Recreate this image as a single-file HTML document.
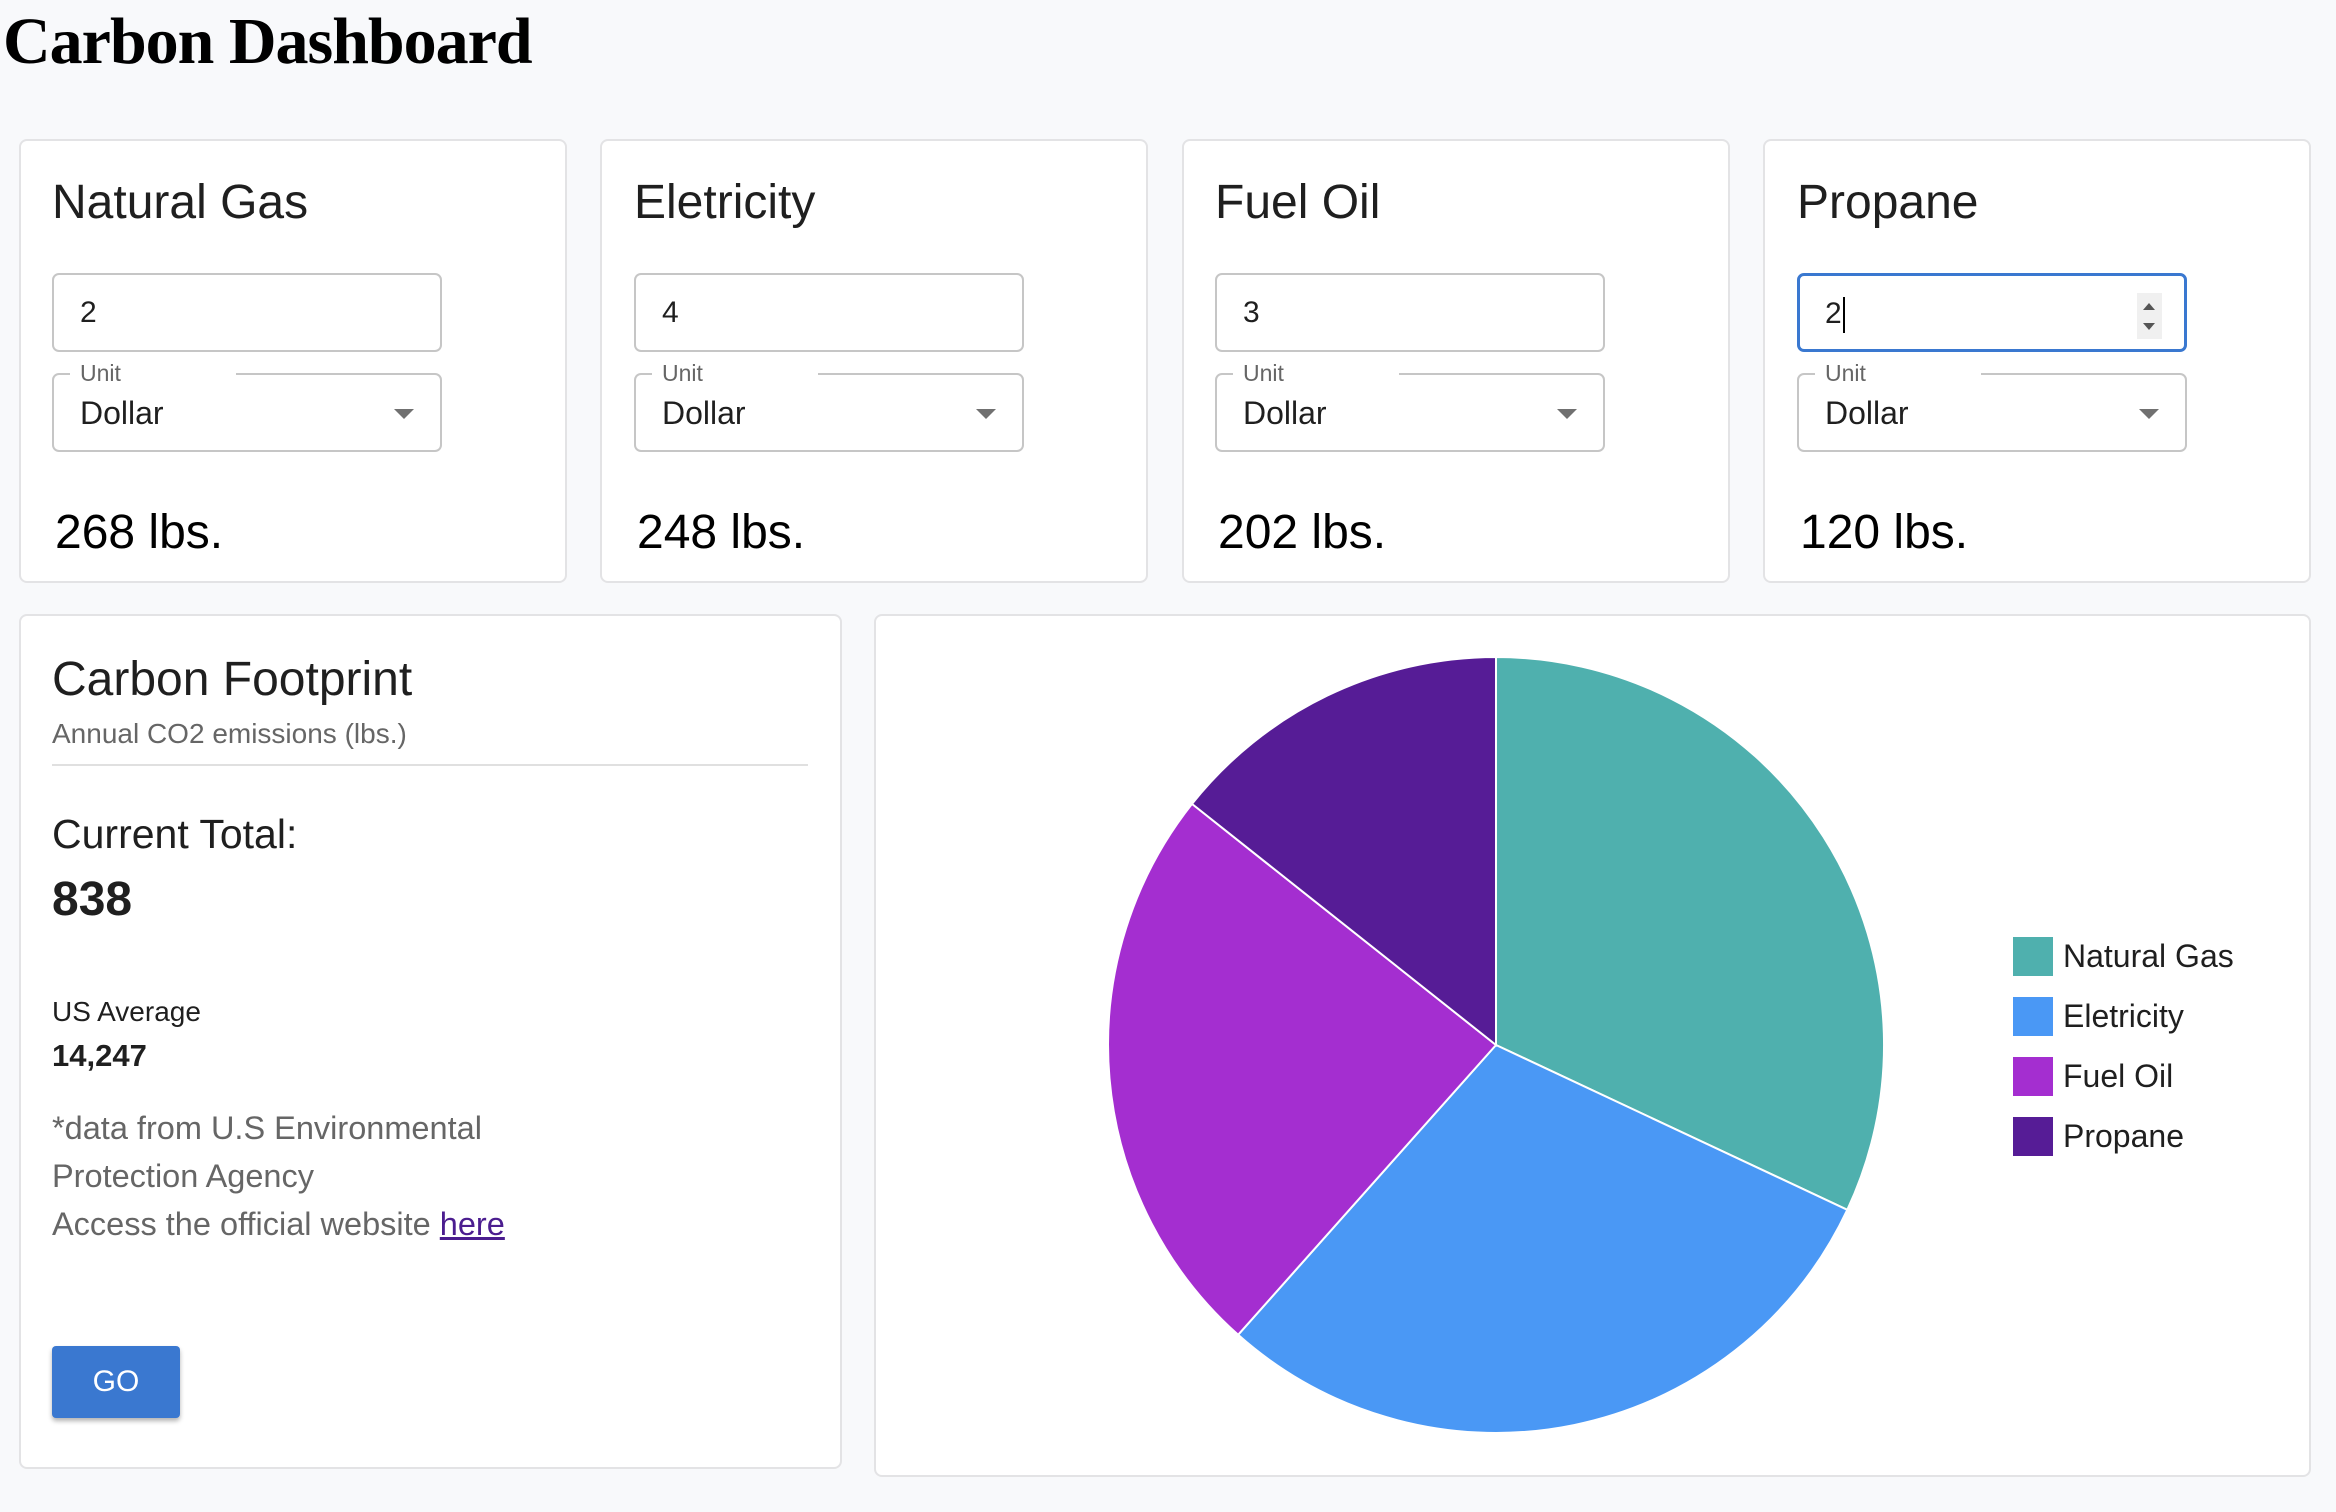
<!DOCTYPE html>
<html><head><meta charset="utf-8"><style>
*{box-sizing:border-box;margin:0;padding:0}
body{width:2336px;height:1512px;background:#f8f9fb;position:relative;overflow:hidden;font-family:"Liberation Sans",Arial,sans-serif;color:#1f1f1f}
.a{position:absolute;white-space:nowrap}
h1{position:absolute;left:3px;top:2px;font-family:"Liberation Serif",serif;font-weight:bold;font-size:66px;line-height:80px;color:#000;letter-spacing:-1px}
.card{position:absolute;background:#fff;border:2px solid #e3e3e5;border-radius:8px}
.t{font-size:48px;line-height:50px}
.inp{position:absolute;border:2px solid #c6c6c6;border-radius:7px;width:390px;height:79px;font-size:30px;padding-left:26px;line-height:75px}
.sel{position:absolute;border:2px solid #c6c6c6;border-radius:7px;width:390px;height:79px}
.lab{position:absolute;top:-20px;left:16px;width:166px;background:#fff;padding:0 10px;font-size:23px;color:#666;line-height:36px}
.dol{position:absolute;left:26px;top:20px;font-size:32px}
.arr{position:absolute;right:26px;top:34px;width:0;height:0;border-left:10px solid transparent;border-right:10px solid transparent;border-top:10px solid #707070}
.lbs{font-size:48px;color:#000}
.lg{position:absolute;left:2013px;width:40px;height:39px}
.lt{position:absolute;left:2063px;font-size:32px;line-height:39px;color:#1f1f1f}
</style></head><body>
<h1>Carbon Dashboard</h1>

<div class="card" style="left:19px;top:139px;width:548px;height:444px"></div>
<div class="card" style="left:600px;top:139px;width:548px;height:444px"></div>
<div class="card" style="left:1182px;top:139px;width:548px;height:444px"></div>
<div class="card" style="left:1763px;top:139px;width:548px;height:444px"></div>

<div class="a t" style="left:52px;top:178px">Natural Gas</div>
<div class="a t" style="left:634px;top:178px">Eletricity</div>
<div class="a t" style="left:1215px;top:178px">Fuel Oil</div>
<div class="a t" style="left:1797px;top:178px">Propane</div>

<div class="inp" style="left:52px;top:273px">2</div>
<div class="inp" style="left:634px;top:273px">4</div>
<div class="inp" style="left:1215px;top:273px">3</div>
<div class="inp" style="left:1797px;top:273px;border:3px solid #3a78d0;padding-left:25px">2<span style="display:inline-block;width:2px;height:36px;background:#000;vertical-align:middle;margin-left:1px"></span>
<div style="position:absolute;right:22px;top:17px;width:25px;height:46px;background:#f0f0f0"><div style="position:absolute;left:6px;top:10px;border-left:6px solid transparent;border-right:6px solid transparent;border-bottom:7px solid #555"></div><div style="position:absolute;left:6px;top:30px;border-left:6px solid transparent;border-right:6px solid transparent;border-top:7px solid #555"></div></div></div>

<div class="sel" style="left:52px;top:373px"><div class="lab">Unit</div><div class="dol">Dollar</div><div class="arr"></div></div>
<div class="sel" style="left:634px;top:373px"><div class="lab">Unit</div><div class="dol">Dollar</div><div class="arr"></div></div>
<div class="sel" style="left:1215px;top:373px"><div class="lab">Unit</div><div class="dol">Dollar</div><div class="arr"></div></div>
<div class="sel" style="left:1797px;top:373px"><div class="lab">Unit</div><div class="dol">Dollar</div><div class="arr"></div></div>

<div class="a lbs" style="left:55px;top:505px">268 lbs.</div>
<div class="a lbs" style="left:637px;top:505px">248 lbs.</div>
<div class="a lbs" style="left:1218px;top:505px">202 lbs.</div>
<div class="a lbs" style="left:1800px;top:505px">120 lbs.</div>

<div class="card" style="left:19px;top:614px;width:823px;height:855px"></div>
<div class="a" style="left:52px;top:652px;font-size:48px">Carbon Footprint</div>
<div class="a" style="left:52px;top:718px;font-size:28px;color:#666">Annual CO2 emissions (lbs.)</div>
<div class="a" style="left:52px;top:764px;width:756px;height:2px;background:#e0e0e0"></div>
<div class="a" style="left:52px;top:811px;font-size:41px">Current Total:</div>
<div class="a" style="left:52px;top:872px;font-size:48px;font-weight:bold">838</div>
<div class="a" style="left:52px;top:996px;font-size:28px">US Average</div>
<div class="a" style="left:52px;top:1038px;font-size:31px;font-weight:bold">14,247</div>
<div class="a" style="left:52px;top:1104px;font-size:32.5px;line-height:48px;color:#666">*data from U.S Environmental<br>Protection Agency<br>Access the official website <span style="color:#4b1d8f;text-decoration:underline">here</span></div>
<div class="a" style="left:52px;top:1346px;width:128px;height:72px;background:#3a78d0;border-radius:4px;box-shadow:0 3px 5px rgba(0,0,0,.3);color:#fff;font-size:30px;line-height:72px;text-align:center">GO</div>

<div class="card" style="left:874px;top:614px;width:1437px;height:863px"></div>
<svg class="a" style="left:0;top:0" width="2336" height="1512">
<g stroke="#fff" stroke-width="2">
<path d="M1496 1045 L1496 657 A388 388 0 0 1 1847.3 1209.8 Z" fill="#4fb0ae"/>
<path d="M1496 1045 L1847.3 1209.8 A388 388 0 0 1 1238.1 1334.8 Z" fill="#4a98f5"/>
<path d="M1496 1045 L1238.1 1334.8 A388 388 0 0 1 1192 803.9 Z" fill="#a42ed0"/>
<path d="M1496 1045 L1192 803.9 A388 388 0 0 1 1496 657 Z" fill="#561c96"/>
</g></svg>
<div class="lg" style="top:937px;background:#4fb0ae"></div><div class="lt" style="top:937px">Natural Gas</div>
<div class="lg" style="top:997px;background:#4a98f5"></div><div class="lt" style="top:997px">Eletricity</div>
<div class="lg" style="top:1057px;background:#a42ed0"></div><div class="lt" style="top:1057px">Fuel Oil</div>
<div class="lg" style="top:1117px;background:#561c96"></div><div class="lt" style="top:1117px">Propane</div>
</body></html>
